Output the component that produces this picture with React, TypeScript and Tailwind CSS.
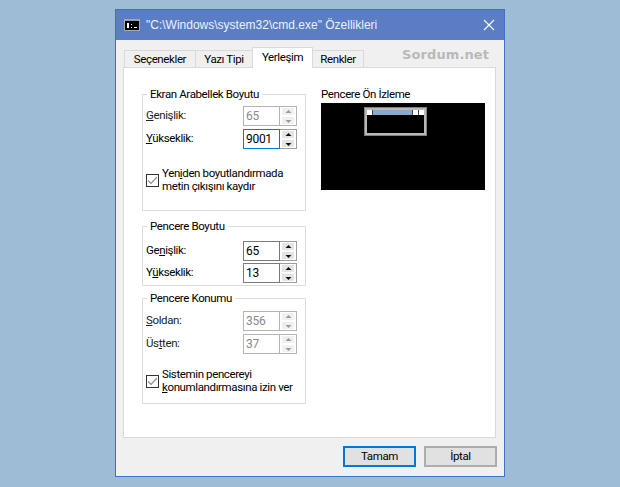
import React from "react";

const font = "font-['Roboto',sans-serif]";
const txt = "text-[11.5px] tracking-[-0.38px]";

function Arrow({ up, disabled }: { up?: boolean; disabled?: boolean }) {
  return (
    <svg width="7" height="4" viewBox="0 0 7 4" className="block">
      <polygon
        points={up ? "3.5,0 6.5,3 0.5,3" : "0.5,1 6.5,1 3.5,4"}
        fill={disabled ? "#9a9a9a" : "#111"}
      />
    </svg>
  );
}

function Spin({ value, disabled, focused }: { value: string; disabled?: boolean; focused?: boolean }) {
  const border = disabled ? "border-[#b4b4b4]" : focused ? "border-[#0078d7]" : "border-[#7a7a7a]";
  const btnBg = disabled ? "bg-[#f0f0f0]" : "bg-[#e4e4e4]";
  return (
    <div className="flex h-5 w-[54px]">
      <div
        className={`flex h-5 w-[37px] items-center border pl-[2px] text-[12px] tracking-[-0.3px] ${border} ${
          disabled ? "text-[#8a8a8a]" : "text-black"
        }`}
      >
        {value}
      </div>
      <div
        className={`flex h-5 w-[17px] flex-col gap-[2px] border border-l-0 bg-white px-[2px] py-[1px] ${
          disabled ? "border-[#b4b4b4]" : "border-[#9c9c9c]"
        }`}
      >
        <div className={`flex flex-1 items-center justify-center ${btnBg}`}>
          <Arrow up disabled={disabled} />
        </div>
        <div className={`flex flex-1 items-center justify-center ${btnBg}`}>
          <Arrow disabled={disabled} />
        </div>
      </div>
    </div>
  );
}

function Row({ label, value, disabled, focused }: { label: React.ReactNode; value: string; disabled?: boolean; focused?: boolean }) {
  return (
    <div className="flex h-5 items-center justify-between">
      <span className={`${txt} whitespace-nowrap ${disabled ? "text-[#222]" : "text-black"}`}>{label}</span>
      <Spin value={value} disabled={disabled} focused={focused} />
    </div>
  );
}

function Group({ title, className, children }: { title: string; className: string; children: React.ReactNode }) {
  return (
    <fieldset className={`w-[164px] min-w-0 border border-[#dcdcdc] pl-[3px] pr-[8px] ${className}`}>
      <legend className={`ml-[1px] px-[3px] ${txt} leading-[14px] text-black`}>{title}</legend>
      {children}
    </fieldset>
  );
}

function Check({ children }: { children: React.ReactNode }) {
  return (
    <div className="flex items-center gap-[3px]">
      <span className="flex h-[13px] w-[13px] shrink-0 items-center justify-center border border-[#333] bg-white">
        <svg width="11" height="9" viewBox="0 0 11 9">
          <path d="M1 4.5 L4 7.5 L10 1" fill="none" stroke="#8f8f8f" strokeWidth="1.2" />
        </svg>
      </span>
      <span className={`${txt} leading-[13px] whitespace-nowrap text-black`}>{children}</span>
    </div>
  );
}

function Tab({ label, w, active }: { label: string; w: string; active?: boolean }) {
  return active ? (
    <div
      className={`z-10 mb-[-1px] flex h-[21px] items-center justify-center border border-b-0 border-[#d9d9d9] bg-white pb-[1px] ${txt} text-black ${w}`}
    >
      {label}
    </div>
  ) : (
    <div
      className={`flex h-[17px] items-center justify-center border border-b-0 border-[#d9d9d9] bg-[#f0f0f0] pt-[1px] ${txt} text-black ${w}`}
    >
      {label}
    </div>
  );
}

export default function App() {
  return (
    <div className={`h-[487px] w-[620px] overflow-hidden bg-[#9ebcd6] pl-[115px] pt-[9px] ${font}`}>
      <div className="relative h-[468px] w-[390px] border border-[#3f70c8] bg-[#f0f0f0]">
        <div className="flex h-[30px] items-center bg-[#5a7dc3] pl-[8px] pr-[9px] text-[#edf1f9]">
          <svg width="16" height="12" viewBox="0 0 16 12" className="shrink-0">
            <rect x="0.5" y="0.5" width="15" height="11" fill="#000" stroke="#a8a8a8" strokeWidth="1" />
            <rect x="1" y="1" width="14" height="1" fill="#9a9a9a" />
            <rect x="3" y="4" width="2" height="5" fill="#fff" />
            <rect x="7" y="5" width="1" height="1" fill="#fff" />
            <rect x="7" y="8" width="1" height="1" fill="#fff" />
            <rect x="10" y="8" width="3" height="1" fill="#fff" />
          </svg>
          <span className="ml-[6px] font-['Liberation_Sans',sans-serif] text-[12px] whitespace-nowrap">
            "C:\Windows\system32\cmd.exe" Özellikleri
          </span>
          <svg width="12" height="12" viewBox="0 0 12 12" className="ml-auto shrink-0">
            <path d="M1 1 L11 11 M11 1 L1 11" stroke="#fff" strokeWidth="1.1" />
          </svg>
        </div>

        <span className="absolute left-[286px] top-[35px] font-['DejaVu_Sans',sans-serif] text-[13px] font-bold tracking-[0.1px] text-[#b9b9b9]">
          Sordum.net
        </span>

        <div className="flex h-[27px] items-end pl-[8px]">
          <Tab label="Seçenekler" w="w-[72px]" />
          <Tab label="Yazı Tipi" w="w-[58px] ml-[-1px]" />
          <Tab label="Yerleşim" w="w-[61px] ml-[-1px]" active />
          <Tab label="Renkler" w="w-[52px] ml-[-1px]" />
        </div>

        <div className="ml-[7px] flex h-[371px] w-[373px] gap-[15px] border border-[#d9d9d9] bg-white pl-[18px] pt-[19px]">
          <div className="flex flex-col">
            <Group title="Ekran Arabellek Boyutu" className="h-[124px]">
              <div className="mt-[5px] flex flex-col gap-[3px]">
                <Row disabled label={<><u>G</u>enişlik:</>} value="65" />
                <Row focused label={<><u>Y</u>ükseklik:</>} value="9001" />
              </div>
              <div className="mt-[18px]">
                <Check>
                  Yen<u>i</u>den boyutlandırmada
                  <br />
                  metin çıkışını kaydır
                </Check>
              </div>
            </Group>
            <Group title="Pencere Boyutu" className="mt-[8px] h-[67px]">
              <div className="mt-[8px] flex flex-col gap-[2px]">
                <Row label={<>Ge<u>n</u>işlik:</>} value="65" />
                <Row label={<>Y<u>ü</u>kseklik:</>} value="13" />
              </div>
            </Group>
            <Group title="Pencere Konumu" className="mt-[5px] h-[113px]">
              <div className="mt-[6px] flex flex-col gap-[3px]">
                <Row disabled label={<><u>S</u>oldan:</>} value="356" />
                <Row disabled label={<>Üs<u>t</u>ten:</>} value="37" />
              </div>
              <div className="mt-[14px]">
                <Check>
                  Sistemin pencereyi
                  <br />
                  <u>k</u>onumlandırmasına izin ver
                </Check>
              </div>
            </Group>
          </div>

          <div className="flex flex-col">
            <div className={`${txt} h-[15px] leading-[15px] text-black`}>Pencere Ön İzleme</div>
            <div className="relative mt-[1px] h-[87px] w-[164px] bg-black">
              <div className="absolute left-[43px] top-[4px] h-[29px] w-[63px] border border-[#808080] bg-black">
                <div className="flex h-[27px] flex-col border-2 border-[#b8b8b8] bg-black">
                  <div className="flex h-[5px] gap-[1px] bg-[#444]">
                    <div className="h-[5px] w-[5px] shrink-0 bg-white" />
                    <div className="h-[5px] flex-1 bg-[#8aa9cc]" />
                    <div className="h-[5px] w-[5px] shrink-0 bg-white" />
                    <div className="h-[5px] w-[5px] shrink-0 bg-white" />
                  </div>
                </div>
              </div>
            </div>
          </div>
        </div>

        <div className="mt-[8px] flex justify-end gap-[8px] pr-[7px]">
          <button className={`flex h-[21px] w-[73px] items-center justify-center border-2 border-[#0078d7] bg-[#e1e1e1] ${txt} text-black`}>
            Tamam
          </button>
          <button className={`flex h-[21px] w-[73px] items-center justify-center border-2 border-[#adadad] bg-[#e1e1e1] ${txt} text-black`}>
            İptal
          </button>
        </div>
      </div>
    </div>
  );
}
